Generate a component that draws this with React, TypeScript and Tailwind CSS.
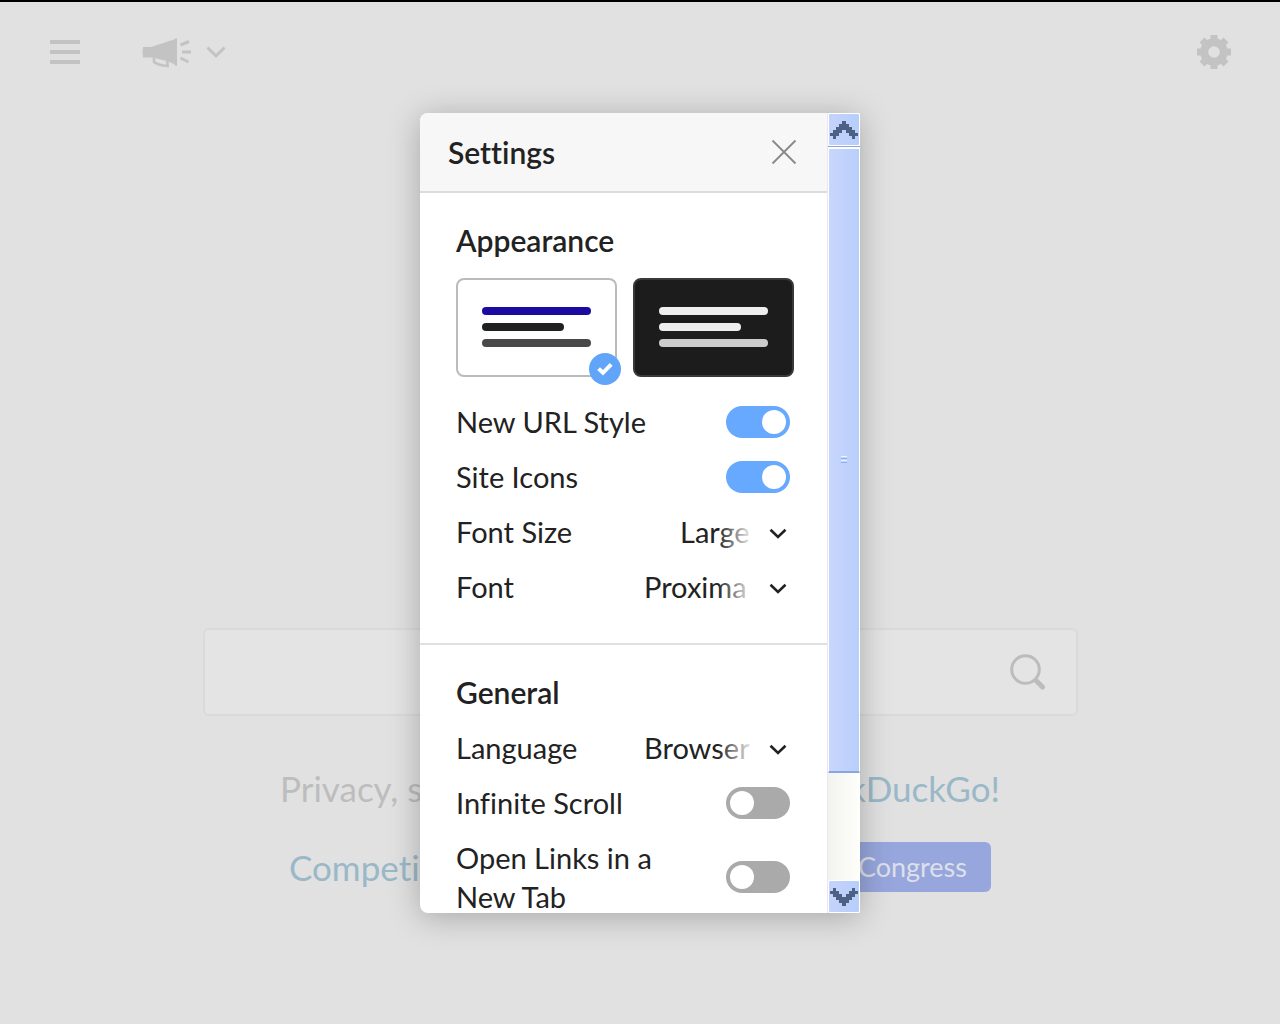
import { ReactNode, useState } from "react";

type ToggleRowProps = {
    id: string;
    label: string;
    defaultOn?: boolean;
};

function ToggleRow({ id, label, defaultOn = false }: ToggleRowProps) {
    const [on, setOn] = useState(defaultOn);

    return (
        <div className="flex items-center justify-between gap-4 pr-1">
            <label htmlFor={id} className="max-w-[230px]">{label}</label>
            <input
                id={id}
                type="checkbox"
                checked={on}
                onChange={() => setOn(!on)}
                className="h-8 w-16 shrink-0 appearance-none rounded-full bg-[#aaaaaa] p-1 before:block before:size-6 before:rounded-full before:bg-white checked:bg-[#67a9ff] checked:before:ml-8"
            />
        </div>
    );
}

type SelectRowProps = {
    id: string;
    label: string;
    options: string[];
    short?: boolean;
};

function SelectRow({ id, label, options, short = false }: SelectRowProps) {
    return (
        <div className="flex items-center justify-between gap-4 pr-1">
            <label htmlFor={id}>{label}</label>
            <div className={short ? "relative w-[110px]" : "relative w-[146px]"}>
                <select id={id} className="block w-full appearance-none bg-transparent leading-[39px] outline-none">
                    {options.map((option) => (
                        <option key={option}>{option}</option>
                    ))}
                </select>
                {/* fades the value out before the arrow */}
                <span className="pointer-events-none absolute inset-y-0 right-0 flex w-[72px] items-center justify-end bg-linear-to-r from-white/0 to-white to-50% pt-1 pr-[3px]">
                    <svg width="18" height="12" viewBox="0 0 18 12" fill="none" stroke="#222" strokeWidth="2.6">
                        <path d="M1.5 1.8 L9 9 L16.5 1.8" />
                    </svg>
                </span>
            </div>
        </div>
    );
}

type ThemeCardProps = {
    name: string;
    selected: boolean;
    onSelect: () => void;
    className: string;
    bars: string[];
};

function ThemeCard({ name, selected, onSelect, className, bars }: ThemeCardProps) {
    return (
        <button
            type="button"
            aria-label={name}
            aria-pressed={selected}
            onClick={onSelect}
            className={`relative flex h-[99px] flex-col gap-2 rounded-lg border-2 px-6 pt-[27px] ${className}`}
        >
            <span className={`h-2 w-full rounded-full ${bars[0]}`}></span>
            <span className={`h-2 w-3/4 rounded-full ${bars[1]}`}></span>
            <span className={`h-2 w-full rounded-full ${bars[2]}`}></span>
            {selected && (
                <span className="absolute -right-1.5 -bottom-2.5 flex size-8 items-center justify-center rounded-full bg-[#60a5fa]">
                    <svg width="16" height="14" viewBox="0 0 16 14" fill="none" stroke="white" strokeWidth="4">
                        <path d="M1.6 6.6 L6 10.8 L14.2 2.4" />
                    </svg>
                </span>
            )}
        </button>
    );
}

function Section({ title, children }: { title: string; children: ReactNode }) {
    return (
        <section className="flex flex-col gap-4 border-b-2 border-[#e0e0e0] pt-7 pr-[33px] pb-[37px] pl-9">
            <h3 className="text-[30px] font-semibold">{title}</h3>
            {children}
        </section>
    );
}

function ScrollArrow({ down = false }: { down?: boolean }) {
    return (
        <button
            type="button"
            aria-label={down ? "Scroll down" : "Scroll up"}
            className="flex h-[33px] shrink-0 items-center justify-center rounded-xs border border-white bg-linear-to-r from-[#c5d3fb] to-[#b6cefb]"
        >
            <svg
                width="28"
                height="18"
                viewBox="0 0 28 18"
                fill="#4d6185"
                shapeRendering="crispEdges"
                className={down ? "rotate-180" : ""}
            >
                <path d="M12 0h4v3h3v3h3v3h3v3h3v3h-3v3h-3v-3h-3v-3h-3v-3h-4v3h-3v3h-3v3h-3v-3h-3v-3h3v-3h3v-3h3v-3h3z" />
            </svg>
        </button>
    );
}

function ScrollBar() {
    return (
        <div className="flex w-[33px] shrink-0 flex-col border-l border-[#e8e8ee] bg-linear-to-r from-[#f3f4ef] to-[#fefefb]">
            <ScrollArrow />
            <div className="min-h-0 flex-1 border-t border-[#8ba5e0]">
                <div className="flex h-[85.4%] flex-col items-center justify-center gap-px border-x border-t-2 border-b-2 border-x-white border-t-white border-b-[#8ba5e0] bg-linear-to-r from-[#c8d6fb] via-[#c1d2fc] to-[#b7cffb]">
                    <span className="h-px w-1.5 bg-[#eef4fe]"></span>
                    <span className="h-px w-1.5 bg-[#8cb0f8]"></span>
                    <span className="h-px w-1.5 bg-[#eef4fe]"></span>
                    <span className="h-px w-1.5 bg-[#8cb0f8]"></span>
                </div>
            </div>
            <ScrollArrow down />
        </div>
    );
}

function SettingsDialog() {
    const [theme, setTheme] = useState("light");

    return (
        <div
            role="dialog"
            aria-label="Settings"
            className="flex h-full w-full max-w-[440px] overflow-hidden rounded-lg rounded-r-xs bg-white text-[29px] leading-[39px] text-[#222222] shadow-[0_4px_32px_rgba(0,0,0,0.26)]"
        >
            <div className="min-w-0 flex-1 overflow-hidden">
                <div className="flex h-20 items-center justify-between border-b-2 border-[#dcdcdc] bg-[#f7f7f7] pr-[30px] pl-7">
                    <h2 className="text-[30px] font-semibold">Settings</h2>
                    <button type="button" aria-label="Close">
                        <svg width="26" height="26" viewBox="0 0 26 26" fill="none" stroke="#888" strokeWidth="1.8">
                            <path d="M1.5 1.5 L24.5 24.5 M24.5 1.5 L1.5 24.5" />
                        </svg>
                    </button>
                </div>

                <Section title="Appearance">
                    <div className="mt-0.5 mb-[9px] grid grid-cols-2 gap-4">
                        <ThemeCard
                            name="Light theme"
                            selected={theme === "light"}
                            onSelect={() => setTheme("light")}
                            className="border-[#bbbbbb] bg-white"
                            bars={["bg-[#1c0ba0]", "bg-[#1f2120]", "bg-[#494949]"]}
                        />
                        <ThemeCard
                            name="Dark theme"
                            selected={theme === "dark"}
                            onSelect={() => setTheme("dark")}
                            className="border-[#393939] bg-[#1c1c1c]"
                            bars={["bg-[#eeeeee]", "bg-[#eeeeee]", "bg-[#cccccc]"]}
                        />
                    </div>
                    <ToggleRow id="url-style" label="New URL Style" defaultOn />
                    <ToggleRow id="site-icons" label="Site Icons" defaultOn />
                    <SelectRow id="font-size" label="Font Size" options={["Large", "Small"]} short />
                    <SelectRow id="font" label="Font" options={["Proxima"]} />
                </Section>

                <Section title="General">
                    <SelectRow id="language" label="Language" options={["Browser"]} />
                    <ToggleRow id="infinite-scroll" label="Infinite Scroll" />
                    <ToggleRow id="new-tab" label="Open Links in a New Tab" />
                </Section>
            </div>
            <ScrollBar />
        </div>
    );
}

function Megaphone() {
    return (
        <svg width="50" height="34" viewBox="0 0 50 34" fill="#c3c3c3">
            <path d="M1 12 H9 L32 4.5 Q33 3 35 3 V31 Q33 31.5 32 29 L26 26.5 L11 22.5 H1 Q0 17 1 12Z" />
            <path d="M12 22 V27 Q17 30.5 25.5 31 V26" fill="none" stroke="#c3c3c3" strokeWidth="2.6" />
            <path d="M38.5 10 L47 6.5 M40 17 H49 M38.5 23 L46.5 27" stroke="#c3c3c3" strokeWidth="3" />
        </svg>
    );
}

function Gear() {
    return (
        <svg width="36" height="36" viewBox="0 0 36 36" fill="none" stroke="#c3c3c3">
            <circle cx="18" cy="18" r="9.8" strokeWidth="8" />
            <path
                d="M18 5 V1 M18 31 V35 M5 18 H1 M31 18 H35 M9 9 L6 6 M27 9 L30 6 M9 27 L6 30 M27 27 L30 30"
                strokeWidth="7"
            />
        </svg>
    );
}

export default function App() {
    return (
        <div className="relative min-h-screen border-t-2 border-black bg-[#e1e1e1] font-[Lato,'Liberation_Sans',sans-serif] [font-variant-ligatures:none]">
            {/* Top bar */}
            <header className="flex h-[100px] items-center justify-between px-12">
                <div className="flex items-center">
                    <button type="button" aria-label="Menu" className="flex w-8 flex-col gap-1.5 pl-0.5">
                        <span className="h-1 bg-[#c3c3c3]"></span>
                        <span className="h-1 bg-[#c3c3c3]"></span>
                        <span className="h-1 bg-[#c3c3c3]"></span>
                    </button>
                    <button type="button" aria-label="Spread the word" className="ml-[62px] flex items-center gap-3.5">
                        <Megaphone />
                        <svg width="20" height="14" viewBox="0 0 20 14" fill="none" stroke="#c3c3c3" strokeWidth="3">
                            <path d="M1.5 2.5 L10 11 L18.5 2.5" />
                        </svg>
                    </button>
                </div>
                <button type="button" aria-label="Open settings">
                    <Gear />
                </button>
            </header>

            {/* Search */}
            <main className="flex flex-col items-center pt-[526px] text-[35px] leading-[48px]">
                <form className="flex h-[88px] w-full max-w-[875px] items-center rounded-md border-2 border-[#dadada] bg-[#e4e4e4] pr-[30px]">
                    <input type="text" aria-label="Search" className="h-full min-w-0 flex-1 bg-transparent px-6 outline-none" />
                    <button type="button" aria-label="Submit search">
                        <svg width="36" height="36" viewBox="0 0 36 36" fill="none" stroke="#bcbcbc">
                            <circle cx="15.5" cy="15.5" r="13.8" strokeWidth="3" />
                            <path d="M26 26.5 L32.5 33" strokeWidth="5" strokeLinecap="round" />
                        </svg>
                    </button>
                </form>

                <div className="mt-12 flex w-full max-w-[720px] justify-between text-[#bdbdbd]">
                    <span>Privacy, simplified.</span>
                    <a href="#spread" className="text-[#9ab8c8]">DuckDuckGo!</a>
                </div>
                <div className="mt-[30px] flex w-full max-w-[702px] items-center justify-between">
                    <a href="#competition" className="text-[#9ab8c8]">Competition</a>
                    <a href="#congress" className="rounded-md bg-[#97a6dc] px-6 text-[27px] leading-[50px] text-[#dde0ea]">
                        Tell Congress
                    </a>
                </div>
            </main>

            {/* Dialog layer */}
            <div className="absolute inset-0 flex justify-center py-[111px]">
                <SettingsDialog />
            </div>
        </div>
    );
}
